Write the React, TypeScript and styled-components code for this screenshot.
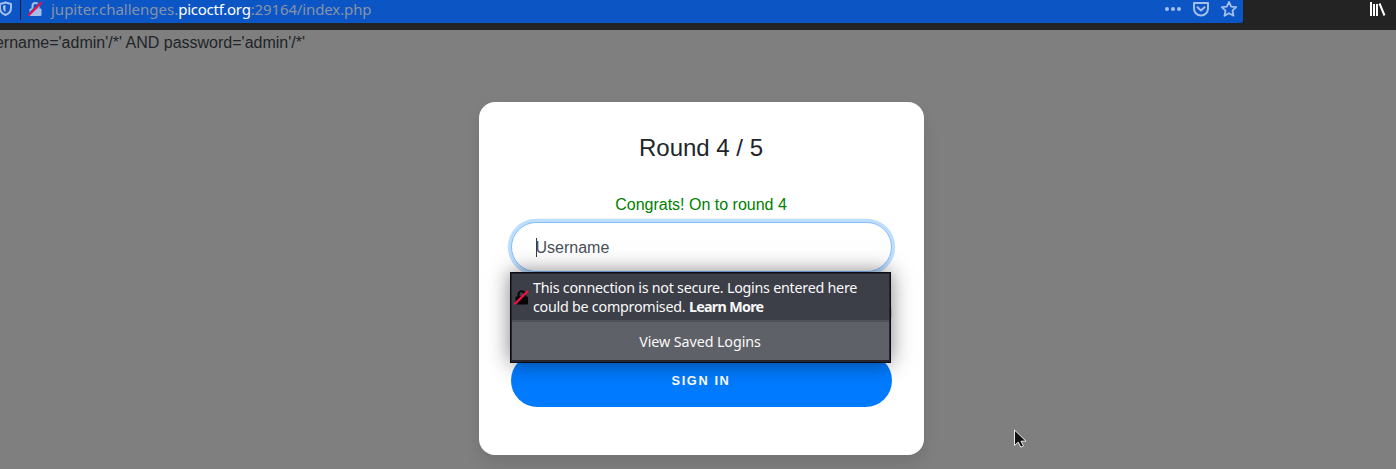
import React from "react";
import styled, { createGlobalStyle } from "styled-components";

const GlobalStyle = createGlobalStyle`
  * { box-sizing: border-box; }
  body {
    margin: 0;
    overflow: hidden;
    background: #7f7f7f;
    color: #212529;
    font: 16px/24px "Liberation Sans", Arial, sans-serif;
  }
`;

const Window = styled.div`
  position: relative;
  display: flex;
  flex-direction: column;
  height: 469px;
  overflow: hidden;
`;

const Toolbar = styled.header`
  display: flex;
  justify-content: space-between;
  align-items: flex-start;
  flex: none;
  height: 30px;
  padding-right: 10px;
  background: #232323;
`;

const UrlBar = styled.div`
  display: flex;
  align-items: flex-start;
  width: 1243px;
  height: 23px;
  padding-right: 5px;
  border-radius: 0 0 3px 0;
  background: #0c55c4;
`;

const Identity = styled.div`
  display: flex;
  align-items: flex-start;
  width: 51px;
  height: 20px;
`;

const Divider = styled.span`
  width: 1px;
  height: 20px;
  margin: 0 7px 0 7px;
  background: #0b1d3c;
`;

const Address = styled.div`
  flex: 1;
  color: #8693a8;
  font: 15px/18px "Noto Sans", sans-serif;
  white-space: nowrap;
`;

const Host = styled.span`
  color: #fff;
  letter-spacing: -0.25px;
`;

const Path = styled.span`
  letter-spacing: -0.12px;
`;

const Actions = styled.div`
  display: flex;
  gap: 10px;
  height: 19px;
`;

const Page = styled.main`
  flex: 1;
  display: flex;
  flex-direction: column;
  align-items: flex-start;
`;

const QueryLine = styled.div`
  display: flex;
  justify-content: flex-end;
  width: 305px;
  height: 24px;
  line-height: 26px;
  white-space: pre;
`;

const Card = styled.section`
  display: flex;
  flex-direction: column;
  width: 445px;
  height: 353px;
  margin: 48px 0 0 479px;
  padding: 31px 32px 32px;
  border-radius: 16px;
  background: #fff;
  box-shadow: 0 8px 16px rgba(0, 0, 0, 0.1);
`;

const Title = styled.h1`
  margin: 0 1px 31px 0;
  font-size: 24px;
  line-height: 29px;
  font-weight: 400;
  text-align: center;
`;

const Notice = styled.p`
  margin: 0 1px 5px 0;
  color: #008000;
  text-align: center;
`;

const LoginForm = styled.form`
  position: relative;
  display: flex;
  flex-direction: column;
`;

const Field = styled.div<{ $focused?: boolean }>`
  display: flex;
  align-items: center;
  height: 50px;
  margin-bottom: 16px;
  padding: 0 24px;
  border: 1px solid ${(p) => (p.$focused ? "#80bdff" : "#ced4da")};
  border-radius: 32px;
  background: #fff;
  color: #495057;
  box-shadow: ${(p) => (p.$focused ? "0 0 0 3.2px rgba(0, 123, 255, 0.25)" : "none")};
`;

const Caret = styled.span`
  width: 1px;
  height: 19px;
  margin-right: -1px;
  background: #343a40;
`;

const Placeholder = styled.span`
  padding-top: 2px;
  margin-left: -0.5px;
`;

const SignIn = styled.button`
  height: 53px;
  padding: 0 1px 1px 0;
  border: 0;
  border-radius: 32px;
  background: #007bff;
  color: #fff;
  font: bold 12.8px/19px "Liberation Sans", Arial, sans-serif;
  letter-spacing: 1.6px;
`;

const Popup = styled.aside`
  position: absolute;
  top: 50px;
  left: -1px;
  width: 381px;
  height: 91px;
  padding: 1px;
  border: 1px solid #0c0c12;
  background: #24252f;
  color: #f9f9fa;
  box-shadow: 0 0 20px rgba(0, 0, 0, 0.5);
  font: 14.3px/19px "Noto Sans", sans-serif;
`;

const Warning = styled.div`
  display: flex;
  align-items: center;
  gap: 4px;
  height: 46px;
  padding-left: 2px;
  background: #3d3f48;
  letter-spacing: -0.25px;
  white-space: nowrap;
`;

const LearnMore = styled.b`
  letter-spacing: -0.7px;
`;

const LoginsRow = styled.div`
  display: flex;
  align-items: center;
  justify-content: center;
  height: 40px;
  padding-right: 1px;
  border-top: 2px solid #50525a;
  background: #5f6168;
  letter-spacing: -0.09px;
`;

const Pointer = styled.svg`
  position: absolute;
  left: 1013px;
  top: 429px;
`;

function InsecureLock() {
  return (
    <svg width="15" height="15" viewBox="0 0 15 15" fill="none">
      <path d="M4.500 7V4.500a3.200 3.200 0 0 1 6.400 0V7" stroke="#050507" strokeWidth="2" />
      <rect x="1.500" y="6.500" width="12.500" height="8" rx="1" fill="#050507" />
      <path d="M.7 14.200 14 1" stroke="#f5103f" strokeWidth="2.200" />
    </svg>
  );
}

export default function App() {
  return (
    <>
      <GlobalStyle />
      <Window>
        <Toolbar>
          <UrlBar>
            <Identity>
              <svg width="13" height="18" viewBox="0 0 13 18" fill="none">
                <path d="M5.500 2.500 11 4v4c0 3.300-2.200 5.800-5.500 7C2.200 13.800 0 11.300 0 8V4z" stroke="#a4bfeb" strokeWidth="2" strokeLinejoin="round" />
                <path d="M5.500 5v7C3.600 11 3 9.400 3 8V5.700z" fill="#a4bfeb" />
              </svg>
              <Divider />
              <svg width="15" height="18" viewBox="0 0 15 18" fill="none">
                <path d="M4.500 9V6a3 3 0 0 1 6 0v3" stroke="#a4bfeb" strokeWidth="2" />
                <rect x="1.500" y="8.500" width="12" height="7.500" rx="1" fill="#a4bfeb" />
                <path d="M.8 14.500 12.800 2" stroke="#0c55c4" strokeWidth="2" />
                <path d="M.5 15.500 13.500 2.500" stroke="#f5103f" strokeWidth="2.200" />
              </svg>
            </Identity>
            <Address>
              jupiter.challenges.<Host>picoctf.org</Host>
              <Path>:29164/index.php</Path>
            </Address>
            <Actions>
              <svg width="18" height="19" viewBox="0 0 18 19" fill="#a4bfeb">
                <circle cx="3" cy="9" r="2" />
                <circle cx="9" cy="9" r="2" />
                <circle cx="15" cy="9" r="2" />
              </svg>
              <svg width="18" height="19" viewBox="0 0 18 19" fill="none" stroke="#a4bfeb" strokeWidth="2" strokeLinecap="round" strokeLinejoin="round">
                <path d="M2 3h14v5.500a7 7 0 0 1-14 0z" />
                <path d="m5.500 7.300 3.500 3.300 3.500-3.300" />
              </svg>
              <svg width="18" height="19" viewBox="0 0 18 19" fill="none" stroke="#a4bfeb" strokeWidth="1.800" strokeLinejoin="round">
                <path d="m9 2 2.200 4.600 5 .6-3.700 3.500 1 5L9 13.200l-4.500 2.500 1-5L1.800 7.200l5-.6z" />
              </svg>
            </Actions>
          </UrlBar>
          <svg width="16" height="19" viewBox="0 0 16 19" fill="none" stroke="#fff" strokeWidth="2">
            <path d="M1 2v14M4 4v12M7 4v12M9.500 3.500l5 12" />
          </svg>
        </Toolbar>
        <Page>
          <QueryLine>username='admin'/*' AND password='admin'/*'</QueryLine>
          <Card>
            <Title>Round 4 / 5</Title>
            <Notice>Congrats! On to round 4</Notice>
            <LoginForm>
              <Field $focused>
                <Caret />
                <Placeholder>Username</Placeholder>
              </Field>
              <Field />
              <SignIn type="button">SIGN IN</SignIn>
              <Popup>
                <Warning>
                  <InsecureLock />
                  <div>
                    This connection is not secure. Logins entered here
                    <br />
                    could be compromised. <LearnMore>Learn More</LearnMore>
                  </div>
                </Warning>
                <LoginsRow>View Saved Logins</LoginsRow>
              </Popup>
            </LoginForm>
          </Card>
        </Page>
        <Pointer width="16" height="20" viewBox="0 0 16 20">
          <path d="M1.500 1v15.500l3.700-3.300 2.600 5 2.700-1.300-2.500-4.700h5z" fill="#111" stroke="#eee" />
        </Pointer>
      </Window>
    </>
  );
}
